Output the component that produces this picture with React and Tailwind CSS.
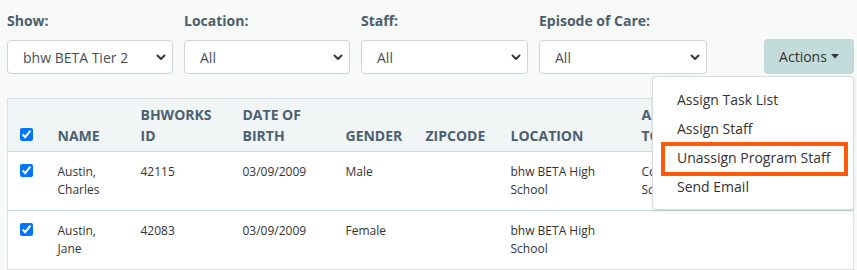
import { useState } from "react";

const filters = [
  { label: "Show:", value: "bhw BETA Tier 2", w: "w-[166px]" },
  { label: "Location:", value: "All", w: "w-[166px]" },
  { label: "Staff:", value: "All", w: "w-[167px]" },
  { label: "Episode of Care:", value: "All", w: "w-[168px]" },
];

const rows = [
  { first: "Austin,", last: "Charles", id: "42115", dob: "03/09/2009", gender: "Male", staff: ["Cooper,", "Scott"] },
  { first: "Austin,", last: "Jane", id: "42083", dob: "03/09/2009", gender: "Female", staff: [] },
];

const menuItems = ["Assign Task List", "Assign Staff", "Unassign Program Staff", "Send Email"];

function Chevron() {
  return (
    <svg width="10" height="7" viewBox="0 0 10 7" fill="none">
      <path d="M1.5 1.5 L5 5 L8.5 1.5" stroke="#343a40" strokeWidth="2" strokeLinecap="round" strokeLinejoin="round" />
    </svg>
  );
}

function Check() {
  return <input type="checkbox" checked readOnly className="w-[13px] h-[13px] m-0 block" />;
}

export default function App() {
  const [open] = useState(true);

  return (
    <div className="min-h-screen bg-[#f8f9f9] font-['Open_Sans',sans-serif] pl-[7px] pr-[3px] pt-[11px]">
      {/* Filters */}
      <div className="flex items-end">
        <div className="flex gap-[11px]">
          {filters.map((f) => (
            <div key={f.label} className={f.w}>
              <div className="text-[14px] leading-5 font-bold text-[#4a5f6b] mb-[9px]">{f.label}</div>
              <div className="h-[34px] bg-white border border-[#ced4da] rounded-[4px] flex items-center justify-between pl-[15px] pr-[6px]">
                <span className="text-[14px] text-[#495057]">{f.value}</span>
                <Chevron />
              </div>
            </div>
          ))}
        </div>

        {/* Actions */}
        <div className="ml-auto relative">
          <button className="h-[35px] w-[90px] bg-[#c3dbdb] rounded-[4px] text-[14px] text-[#333] flex items-center justify-center gap-[4px]">
            Actions
            <svg width="8" height="5" viewBox="0 0 8 5"><path d="M0 0 H8 L4 4.5 Z" fill="#333" /></svg>
          </button>
          {open && (
            <div className="absolute right-0 top-[37px] w-[202px] bg-white border border-[#d9dddf] rounded-[4px] py-2 z-10 shadow-sm">
              {menuItems.map((m) => (
                <div key={m} className="px-[24px] py-[4px] text-[14px] leading-[21px] text-[#333] whitespace-nowrap">
                  {m}
                </div>
              ))}
              {/* highlight */}
              <div className="absolute left-[8px] top-[65px] w-[187px] h-[34px] border-[4px] border-[#fe5a0a]" />
            </div>
          )}
        </div>
      </div>

      {/* Table */}
      <table className="mt-[24px] w-[847px] table-fixed border-collapse border border-[#dee2e6] bg-white">
        <colgroup>
          <col className="w-[38px]" />
          <col className="w-[83px]" />
          <col className="w-[102px]" />
          <col className="w-[103px]" />
          <col className="w-[80px]" />
          <col className="w-[85px]" />
          <col className="w-[131px]" />
          <col />
        </colgroup>
        <thead>
          <tr className="bg-[#f2f5f6] h-[53px] text-[14px] leading-[21px] font-bold text-[#4a6170] text-left">
            <th className="align-bottom pl-[12px] pb-[10px]"><Check /></th>
            <th className="align-bottom pl-[12px] pb-[5px]">NAME</th>
            <th className="align-bottom pl-[12px] pb-[5px]">BHWORKS<br />ID</th>
            <th className="align-bottom pl-[12px] pb-[5px]">DATE OF<br />BIRTH</th>
            <th className="align-bottom pl-[12px] pb-[5px]">GENDER</th>
            <th className="align-bottom pl-[12px] pb-[5px]">ZIPCODE</th>
            <th className="align-bottom pl-[12px] pb-[5px]">LOCATION</th>
            <th className="align-bottom pl-[12px] pb-[5px]">ASSIGNED<br />TO</th>
          </tr>
        </thead>
        <tbody>
          {rows.map((r) => (
            <tr key={r.id} className="border-t border-[#c8dcdc] text-[12px] leading-[18px] text-[#333] align-top">
              <td className="pl-[12px] pt-[12px]"><Check /></td>
              <td className="pl-[12px] pt-[11px] pb-[11px]">{r.first}<br />{r.last}</td>
              <td className="pl-[12px] pt-[11px]">{r.id}</td>
              <td className="pl-[12px] pt-[11px]">{r.dob}</td>
              <td className="pl-[12px] pt-[11px]">{r.gender}</td>
              <td className="pl-[12px] pt-[11px]"></td>
              <td className="pl-[12px] pt-[11px]">bhw BETA High<br />School</td>
              <td className="pl-[12px] pt-[11px]">
                {r.staff.length > 0 && <>{r.staff[0]}<br />{r.staff[1]}</>}
              </td>
            </tr>
          ))}
        </tbody>
      </table>
    </div>
  );
}
